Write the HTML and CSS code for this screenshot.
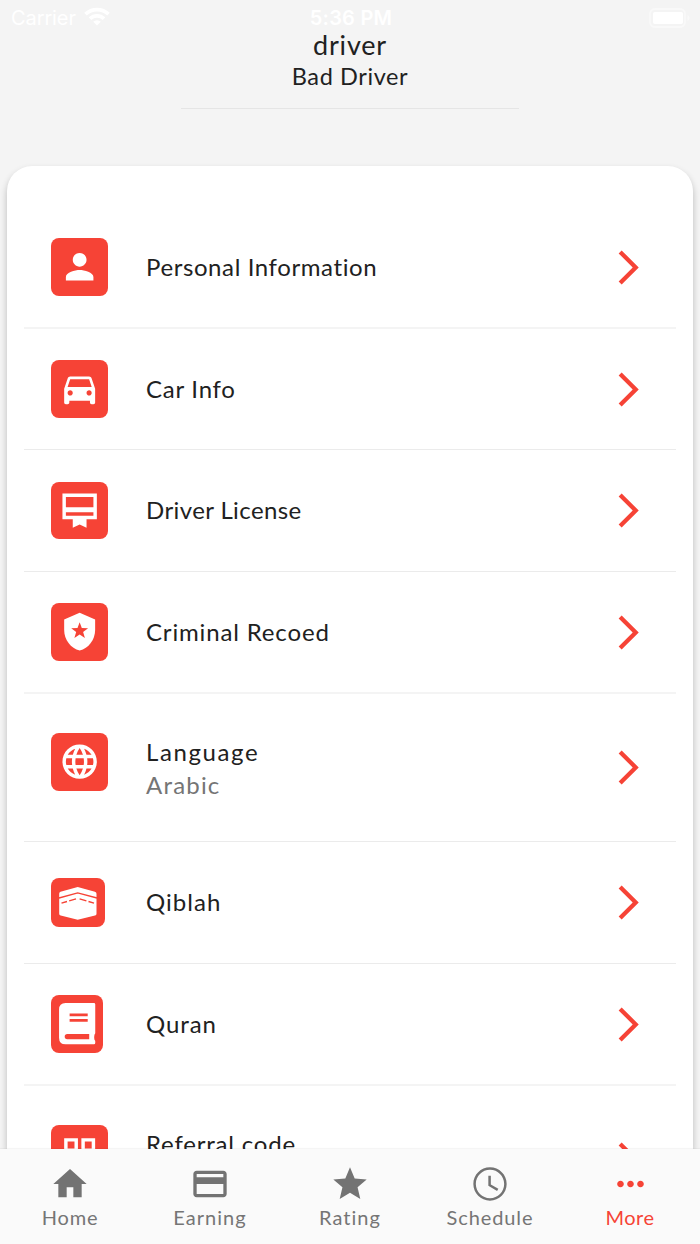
FILE: index.html
```html
<!DOCTYPE html>
<html lang="en">
<head>
<meta charset="utf-8">
<title>More</title>
<link rel="stylesheet" href="styles.css">
</head>
<body>
<svg class="defs" width="0" height="0"><defs>
<symbol id="chevron" viewBox="0 0 24 24"><path d="M6.23 20.23 8 22l10-10L8 2 6.23 3.77 14.46 12z"/></symbol>
</defs></svg>
<div class="screen">
<div class="status">
  <div class="carrier"><span>Carrier</span><svg width="26" height="19" viewBox="0 0 26 19"><path d="M13 18.500 9.200 14.700a5.400 5.400 0 0 1 7.600 0z"/><path class="arc" d="M6 11.700a10 10 0 0 1 14 0M1.500 7.200a16.500 16.500 0 0 1 23 0"/></svg></div>
  <div class="time">5:36 PM</div>
  <svg class="battery" width="42" height="20" viewBox="0 0 42 20"><rect class="shell" x="1" y="1" width="35" height="18" rx="5"/><rect x="4" y="4" width="30" height="12" rx="2"/><path class="tip" d="M38.500 7q2 1 2 3t-2 3z"/></svg>
</div>
<header class="profile"><div class="name">driver</div><div class="title">Bad Driver</div></header>
<main class="card">
  <div class="row r1"><div class="tile"><svg viewBox="0 0 24 24"><path d="M12 12c2.21 0 4-1.79 4-4s-1.79-4-4-4-4 1.79-4 4 1.790 4 4 4zm0 2c-2.670 0-8 1.340-8 4v2h16v-2c0-2.660-5.330-4-8-4z"/></svg></div><div class="label"><span class="t1">Personal Information</span></div><svg class="chev"><use href="#chevron"/></svg></div>
  <div class="row r2"><div class="tile"><svg viewBox="0 0 24 24"><path d="M18.920 6.010C18.720 5.420 18.160 5 17.500 5h-11c-.66 0-1.210.42-1.420 1.010L3 12v8c0 .55.45 1 1 1h1c.55 0 1-.45 1-1v-1h12v1c0 .55.45 1 1 1h1c.55 0 1-.45 1-1v-8l-2.080-5.990zM6.500 16c-.83 0-1.500-.67-1.500-1.500S5.670 13 6.500 13s1.500.67 1.500 1.500S7.330 16 6.500 16zm11 0c-.83 0-1.500-.67-1.500-1.500s.67-1.500 1.500-1.500 1.500.67 1.500 1.500-.67 1.500-1.500 1.500zM5 11l1.500-4.500h11L19 11H5z"/></svg></div><div class="label"><span class="t2">Car Info</span></div><svg class="chev"><use href="#chevron"/></svg></div>
  <div class="row r3"><div class="tile"><svg viewBox="0 0 24 24"><path fill-rule="evenodd" d="M2 2h20v15h-6v5l-4-2-4 2v-5H2zM4 4v6h16V4zM4 13v2h16v-2z"/></svg></div><div class="label"><span class="t3">Driver License</span></div><svg class="chev"><use href="#chevron"/></svg></div>
  <div class="row r4"><div class="tile"><svg viewBox="0 0 24 24"><path d="M12 1 3 5v6c0 5.550 3.840 10.740 9 12 5.160-1.260 9-6.450 9-12V5l-9-4z"/><path class="cut" d="m12 6.500 1.250 3.400 3.650.1-2.880 2.250 1.030 3.500L12 13.700l-3.050 2.050 1.030-3.500L7.100 10l3.650-.1z"/></svg></div><div class="label"><span class="t4">Criminal Recoed</span></div><svg class="chev"><use href="#chevron"/></svg></div>
  <div class="row tall r5"><div class="tile"><svg viewBox="0 0 24 24"><path d="M11.990 2C6.470 2 2 6.480 2 12s4.470 10 9.990 10C17.520 22 22 17.520 22 12S17.520 2 11.990 2zm6.930 6h-2.950c-.32-1.250-.78-2.450-1.380-3.560 1.840.63 3.370 1.910 4.330 3.560zM12 4.040c.83 1.200 1.480 2.530 1.910 3.960h-3.820c.43-1.430 1.080-2.760 1.910-3.960zM4.260 14C4.100 13.360 4 12.690 4 12s.1-1.360.26-2h3.380c-.08.66-.14 1.320-.14 2s.06 1.340.14 2H4.260zm.82 2h2.950c.32 1.250.78 2.450 1.380 3.560-1.840-.63-3.370-1.900-4.330-3.560zm2.950-8H5.080c.96-1.660 2.490-2.930 4.330-3.560C8.810 5.550 8.350 6.750 8.030 8zM12 19.960c-.83-1.200-1.480-2.530-1.910-3.960h3.820c-.43 1.430-1.080 2.760-1.910 3.960zM14.340 14H9.660c-.09-.66-.16-1.320-.16-2s.07-1.350.16-2h4.680c.09.65.16 1.320.16 2s-.07 1.340-.16 2zm.25 5.560c.6-1.110 1.060-2.310 1.380-3.560h2.950c-.96 1.650-2.490 2.930-4.330 3.560zM16.360 14c.08-.66.14-1.320.14-2s-.06-1.340-.14-2h3.380c.16.64.26 1.310.26 2s-.1 1.360-.26 2h-3.380z"/></svg></div><div class="label"><span class="t5">Language</span><span class="sub">Arabic</span></div><svg class="chev"><use href="#chevron"/></svg></div>
  <div class="row r6"><div class="tile qiblah"><svg viewBox="0 0 54 49"><path d="M9.500 13.800 26.700 9l17.200 4.800q1.600.5 1.600 2v20q0 1.400-1.500 1.800L26.700 41.700 9.700 37.600q-1.500-.4-1.500-1.800v-20q0-1.500 1.300-2z"/><path class="cutline" d="M8 20 26.700 14.900 46 20"/><path class="cutline" d="m10.500 25.200 5.500-1.700M18.200 22.800l6.800-2M28.600 20.800l6.800 2M37.500 23.500l5.500 1.700"/></svg></div><div class="label"><span class="t6">Qiblah</span></div><svg class="chev"><use href="#chevron"/></svg></div>
  <div class="row r7"><div class="tile quran"><svg viewBox="0 0 52 57"><path d="M14.500 8h28.200q1.300 0 1.300 1.300v28.500q0 .8-.7 1.400-.7 2.900 0 5.500.7.500.7 1.200v1.800q0 1.300-1.300 1.300H14.500Q8 49 8 42.500v-28Q8 8 14.500 8z"/><path class="cut" d="M16.200 38.700H38v5.200H16.200a2.600 2.600 0 0 1 0-5.200zM18.500 18.500h18v2.700h-18zM18.500 23.800h18v2.700h-18z"/></svg></div><div class="label"><span class="t7">Quran</span></div><svg class="chev"><use href="#chevron"/></svg></div>
  <div class="row tall r8"><div class="tile"><svg viewBox="0 0 24 24"><path fill-rule="evenodd" d="M3 11h8V3H3v8zm2-6h4v4H5V5zM3 21h8v-8H3v8zm2-6h4v4H5v-4zM13 3v8h8V3h-8zm6 6h-4V5h4v4zM13 13h2v2h-2zm4 0h2v2h-2zm-2 2h2v2h-2zm4 0h2v2h-2zm-6 2h2v2h-2zm4 0h2v2h-2zm-2 2h2v2h-2zm4 0h2v2h-2z"/></svg></div><div class="label"><span class="t8">Referral code</span></div><svg class="chev"><use href="#chevron"/></svg></div>
</main>
<nav class="tabs">
  <div class="tab"><svg viewBox="0 0 24 24"><path d="M10 20v-6h4v6h5v-8h3L12 3 2 12h3v8z"/></svg><span class="n1">Home</span></div>
  <div class="tab"><svg viewBox="0 0 24 24"><path d="M20 4H4c-1.110 0-1.990.89-1.990 2L2 18c0 1.110.89 2 2 2h16c1.110 0 2-.89 2-2V6c0-1.110-.89-2-2-2zm0 14H4v-6h16v6zm0-10H4V6h16v2z"/></svg><span class="n2">Earning</span></div>
  <div class="tab"><svg viewBox="0 0 24 24"><path d="M12 17.270 18.180 21l-1.640-7.030L22 9.240l-7.190-.61L12 2 9.190 8.630 2 9.240l5.460 4.730L5.820 21z"/></svg><span class="n3">Rating</span></div>
  <div class="tab"><svg viewBox="0 0 24 24"><path d="M11.990 2C6.470 2 2 6.480 2 12s4.470 10 9.990 10C17.520 22 22 17.520 22 12S17.520 2 11.990 2zM12 20.500c-4.690 0-8.500-3.810-8.500-8.500s3.810-8.500 8.500-8.500 8.500 3.810 8.500 8.500-3.810 8.500-8.500 8.500zM12.500 7H11v6l5.250 3.150.75-1.230-4.500-2.670z"/></svg><span class="n4">Schedule</span></div>
  <div class="tab active"><svg viewBox="0 0 24 24"><path d="M6 10c-1.100 0-2 .9-2 2s.9 2 2 2 2-.9 2-2-.9-2-2-2zm12 0c-1.100 0-2 .9-2 2s.9 2 2 2 2-.9 2-2-.9-2-2-2zm-6 0c-1.100 0-2 .9-2 2s.9 2 2 2 2-.9 2-2-.9-2-2-2z"/></svg><span class="n5">More</span></div>
</nav>
</div>
</body>
</html>
```
FILE: styles.css
```css
* { box-sizing: border-box; }
body { margin: 0; background: #f4f4f4; font-family: Lato, sans-serif; color: #212121; }
svg { display: block; flex: none; }
.defs { position: absolute; }
.screen { width: 700px; height: 1244px; display: flex; flex-direction: column; overflow: hidden; background: #f4f4f4; }
.status { height: 33px; flex: none; display: grid; grid-template-columns: 1fr auto 1fr; align-items: center; padding: 2px 9px 0 11px; color: #fff; font: 20px/24px Inter, sans-serif; fill: #fff; }
.carrier { display: flex; align-items: center; gap: 8px; letter-spacing: -.1px; }
.carrier svg { margin-bottom: 2px; }
.arc { fill: none; stroke: #fff; stroke-width: 3.8; }
.time { font-weight: 600; letter-spacing: .25px; }
.battery { justify-self: end; }
.shell { fill: none; stroke: #f9f9f9; stroke-width: 1.8; }
.tip { fill: #f9f9f9; }
.profile { width: 338px; height: 76px; flex: none; align-self: center; border-bottom: 1px solid #e5e5e5; text-align: center; }
.name { font-size: 27px; line-height: 24px; letter-spacing: .8px; }
.title { font-size: 23.500px; line-height: 38px; letter-spacing: .6px; }
.card { flex: 1; min-height: 0; overflow: hidden; margin: 57px 7px 0; padding: 40px 17px 0; background: #fff; border-radius: 25px 25px 0 0; box-shadow: 0 4px 7px rgba(0,0,0,.24); }
.row { height: 122px; display: grid; grid-template-columns: 95px 1fr 41px; align-items: center; padding: 0 27px; border-bottom: 1px solid #ebebeb; }
.r1 { height: 123px; padding-top: 1px; }
.r2 { height: 121px; }
.r1, .r4, .r7 { border-bottom: 2px solid #f4f4f4; }
.tall { height: 148px; }
.tile { width: 57.300px; height: 57.300px; padding: 8px; border-radius: 8px; background: #f64336; fill: #fff; }
.tile svg { width: 100%; height: 100%; }
.tall .tile { margin-bottom: 11px; }
.qiblah { width: 54px; height: 49px; padding: 0; }
.quran { width: 52.300px; height: 57.300px; padding: 0; }
.cut { fill: #f64336; }
.cutline { fill: none; stroke: #f64336; stroke-width: 1.400; }
.label { display: flex; flex-direction: column; padding-bottom: 2px; font-size: 24px; line-height: 33px; white-space: nowrap; letter-spacing: .6px; }
.r1 .label { padding-bottom: 1px; }
.r5 .label { padding-bottom: 0; }
.sub { color: #757575; letter-spacing: 1.200px; }
.t2 { letter-spacing: .75px; }
.t3 { letter-spacing: .4px; }
.t4 { letter-spacing: .85px; }
.t5 { letter-spacing: 1.600px; }
.t6 { letter-spacing: 1.050px; }
.t7 { letter-spacing: .9px; }
.t8 { letter-spacing: .8px; }
.r8 .label { padding-bottom: 0; margin-bottom: 33px; }
.chev { width: 41px; height: 41px; fill: #f64336; }
.tabs { height: 95px; flex: none; display: grid; grid-template-columns: repeat(5, 1fr); background: #fafafa; position: relative; box-shadow: 0 -1px 1px rgba(0,0,0,.04); }
.tab { display: flex; flex-direction: column; align-items: center; padding-top: 15px; color: #757575; fill: #737373; font-size: 20px; line-height: 26px; letter-spacing: .9px; }
.tab svg { width: 40px; height: 40px; }
.n1 { letter-spacing: .8px; }
.n2, .n3 { letter-spacing: 1.050px; }
.active { color: #f64336; fill: #f64336; }
.active svg { width: 41px; }
.n5 { letter-spacing: .5px; }
```
